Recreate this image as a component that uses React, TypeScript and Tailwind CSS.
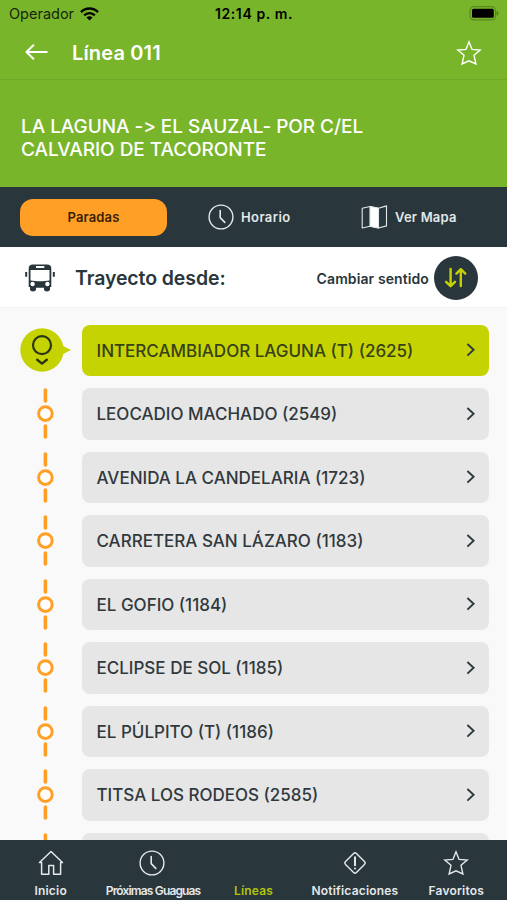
import type { ReactNode } from 'react'

const stops = [
  'INTERCAMBIADOR LAGUNA (T) (2625)',
  'LEOCADIO MACHADO (2549)',
  'AVENIDA LA CANDELARIA (1723)',
  'CARRETERA SAN LÁZARO (1183)',
  'EL GOFIO (1184)',
  'ECLIPSE DE SOL (1185)',
  'EL PÚLPITO (T) (1186)',
  'TITSA LOS RODEOS (2585)',
  '',
]

function ClockIcon() {
  return (
    <svg width="26" height="26" viewBox="0 0 26 26" fill="none" stroke="currentColor" strokeWidth="1.4" strokeLinecap="round">
      <circle cx="13" cy="13" r="11.9" />
      <path d="M12.2 6.5V13.6L16.8 18.4" strokeWidth="1.6" />
    </svg>
  )
}

function StarIcon() {
  return (
    <svg width="26" height="26" viewBox="0 0 26 26" fill="none" stroke="currentColor" strokeWidth="1.4" strokeLinejoin="miter">
      <path d="M13 1.8L16.1 9.4L24.2 10L18 15.3L19.9 24L13 20.8L6.1 24L8 15.3L1.8 10L9.9 9.4Z" />
    </svg>
  )
}

function WifiIcon() {
  return (
    <svg width="19" height="14" viewBox="0 0 19 14" fill="none" stroke="currentColor" strokeWidth="2.4">
      <path d="M1 5.1C5.8 .3 13.2 .3 18 5.1" />
      <path d="M4.2 8.4C7.2 5.3 11.8 5.3 14.8 8.4" />
      <path d="M9.5 13.6L6.5 10.5C8.1 8.9 10.9 8.9 12.5 10.5Z" fill="currentColor" stroke="none" />
    </svg>
  )
}

function MapIcon() {
  return (
    <svg width="27" height="24" viewBox="0 0 27 24" fill="none" stroke="currentColor" strokeWidth="1.1" strokeLinejoin="round">
      <path d="M1.2 3.2L9 1.5L17.5 3.3L25.5 .9V20.9L17.5 23L9 21.2L1.2 23Z" />
      <path d="M9 1.5L17.5 3.3V23L9 21.2Z" fill="#fff" />
    </svg>
  )
}

function BusIcon() {
  return (
    <svg width="30" height="28" viewBox="0 0 30 28">
      <path
        fill="#28353a"
        fillRule="evenodd"
        d="M8 .5H22C24.8 .5 26.3 2 26.3 4.5V23H25V25.5C25 28 19 28 19 25.5V23.8H11V25.5C11 28 5 28 5 25.5V23H3.7V4.5C3.7 2 5.2 .5 8 .5ZM11 2V4H19.3V2ZM5.5 6V16.5C11 17.5 19 17.5 24.5 16.5V6Z"
      />
      <path d="M1.2 8V12.8M28.8 8V12.8" stroke="#28353a" strokeWidth="2" />
      <circle cx="7.6" cy="20" r="2.2" fill="#fff" />
      <circle cx="22.4" cy="20" r="2.2" fill="#fff" />
    </svg>
  )
}

function HomeIcon() {
  return (
    <svg width="26" height="26" viewBox="0 0 26 26" fill="none" stroke="currentColor" strokeWidth="1.5" strokeLinejoin="round" strokeLinecap="round">
      <path d="M1.5 12.5L13 1.5L24.5 12.5H22.6V24.2H15.6V15.5H10.8V24.2H3.6V12.5Z" />
    </svg>
  )
}

function AlertIcon() {
  return (
    <svg width="24" height="24" viewBox="0 0 24 24" fill="none" stroke="currentColor" strokeWidth="1.4" strokeLinecap="round">
      <rect x="4.3" y="4.3" width="15.4" height="15.4" rx="2" transform="rotate(45 12 12)" />
      <path d="M12 6.2V14.2M12 17.4V17.5" strokeWidth="2" />
    </svg>
  )
}

function CurrentStopMarker() {
  return (
    <svg width="52" height="44" viewBox="0 0 52 44" fill="none">
      <path d="M40 16.5L51 22L40 27.5Z" fill="#c6d303" />
      <circle cx="22" cy="22" r="21.7" fill="#c6d303" />
      <circle cx="22" cy="17.2" r="9" stroke="#2b350f" strokeWidth="2.2" />
      <path d="M17.2 31.8L22 35.6L26.8 31.8" stroke="#2b350f" strokeWidth="2.4" strokeLinecap="round" strokeLinejoin="round" />
    </svg>
  )
}

function StopMarker() {
  return (
    <svg width="18" height="51" viewBox="0 0 18 51" fill="none" stroke="#ff9f26">
      <path d="M9.4 2V13M9.4 38V49" strokeWidth="3.6" strokeLinecap="round" />
      <circle cx="9.4" cy="25.6" r="6.8" strokeWidth="3" fill="#fff" />
    </svg>
  )
}

function StopRow({ name, active }: { name: string; active: boolean }) {
  return (
    <li className="flex h-[51.5px] shrink-0">
      <div className={`flex w-[62px] items-center ${active ? '' : 'pl-4'}`}>{active ? <CurrentStopMarker /> : <StopMarker />}</div>
      <div className={`flex w-[407px] items-center justify-between rounded-lg pr-[13px] pl-[14.5px] ${active ? 'bg-[#c6d303]' : 'bg-[#e6e6e6]'}`}>
        <span className={`pt-0.5 text-[17px] font-medium whitespace-nowrap ${active ? 'text-[#36411a]' : 'text-[#30393d]'}`}>{name}</span>
        <svg width="10" height="16" viewBox="0 0 10 16" fill="none" stroke="#30393d" strokeWidth="1.9">
          <path d="M1.4 2L7.6 7.8L1.4 13.6" />
        </svg>
      </div>
    </li>
  )
}

function NavItem({ icon, label, className = 'tracking-[0.2px]' }: { icon?: ReactNode; label: string; className?: string }) {
  return (
    <div className="flex flex-1 flex-col items-center">
      <div className="flex h-[46px] items-center">{icon}</div>
      <span className={`text-[12px] leading-[10px] font-semibold whitespace-nowrap ${className}`}>{label}</span>
    </div>
  )
}

export default function App() {
  return (
    <div className="flex h-[900px] w-[507px] flex-col overflow-hidden bg-[#f9f9f9] font-['Inter',sans-serif]">
      <header className="flex h-[187px] shrink-0 flex-col bg-[#79b52b] text-white">
        <div className="grid h-[27px] grid-cols-3 items-center pr-2 pl-[9px] text-black">
          <div className="flex items-center gap-1.5">
            <span className="text-[14.5px] text-[#16260a]">Operador</span>
            <WifiIcon />
          </div>
          <span className="text-center text-[14px] font-semibold tracking-[0.62px] whitespace-nowrap">12:14 p. m.</span>
          <svg className="justify-self-end" width="31" height="15" viewBox="0 0 31 15">
            <rect x="2" y=".7" width="25.6" height="13.2" rx="4" fill="none" stroke="#5a8a20" strokeWidth="1.2" />
            <rect x="4" y="2.8" width="21.8" height="9" rx="1.5" fill="#000" />
            <path d="M28.7 5C31 6 31 8.6 28.7 9.6Z" fill="#4e7a1b" />
          </svg>
        </div>
        <div className="flex h-[53px] items-center border-b border-[#70a928] px-[25px] pb-px">
          <svg className="-mt-0.5" width="23" height="16" viewBox="0 0 23 16" fill="none" stroke="currentColor" strokeWidth="2" strokeLinecap="round" strokeLinejoin="round">
            <path d="M21.8 8H1.5M8.3 1.2L1.5 8L8.3 14.8" />
          </svg>
          <h1 className="ml-6 flex-1 text-[20px] font-semibold tracking-[0.15px]">Línea 011</h1>
          <StarIcon />
        </div>
        <p className="pt-[35px] pl-[21px] text-[19px] leading-[23px] font-medium tracking-[-0.05px] [font-feature-settings:'calt'_0]">
          LA LAGUNA -&gt; EL SAUZAL- POR C/EL
          <br />
          CALVARIO DE TACORONTE
        </p>
      </header>

      <div className="flex h-[60px] shrink-0 items-center bg-[#29363c] pl-5 text-[13px] font-semibold text-[#e3e8ea]">
        <div className="flex h-[37px] w-[147px] items-center justify-center rounded-[13px] bg-[#ff9f26] pt-px tracking-[0.15px] text-[#3a1f05]">Paradas</div>
        <div className="ml-[41px] flex w-[153px] items-center gap-[7px] tracking-[0.4px]">
          <ClockIcon />
          <span className="pt-0.5">Horario</span>
        </div>
        <div className="flex items-center gap-[7px] tracking-[0.2px]">
          <MapIcon />
          <span className="pt-0.5">Ver Mapa</span>
        </div>
      </div>

      <div className="flex h-[61px] shrink-0 items-center border-b border-[#f4f4f4] bg-white pt-0.5 pr-[29px] pl-[25px] text-[#29363c]">
        <BusIcon />
        <h2 className="ml-5 flex-1 pt-0.5 text-[19.5px] font-semibold tracking-[-0.1px] whitespace-nowrap">Trayecto desde:</h2>
        <span className="text-[14px] font-semibold tracking-[0.1px] whitespace-nowrap">Cambiar sentido</span>
        <div className="ml-[5px] flex size-11 items-center justify-center rounded-full bg-[#29363c]">
          <svg width="24" height="22" viewBox="0 0 24 22" fill="none" stroke="#c6d303" strokeWidth="2.4" strokeLinecap="round" strokeLinejoin="round">
            <path d="M6.6 2V18.8M2.1 14.8L6.6 19.2L11 14.8M16.8 19V2.2M12.4 6.6L16.8 2.2L21.3 6.6" />
          </svg>
        </div>
      </div>

      <ul className="flex min-h-0 flex-1 flex-col gap-3 overflow-hidden pt-[16.5px] pl-5">
        {stops.map((name, i) => (
          <StopRow key={i} name={name} active={i === 0} />
        ))}
      </ul>

      <nav className="flex h-[60px] shrink-0 bg-[#29363c] text-[#e3e8ea]">
        <NavItem icon={<HomeIcon />} label="Inicio" />
        <NavItem icon={<ClockIcon />} label="Próximas Guaguas" className="pl-0.5 tracking-[-0.85px]" />
        <NavItem label="Líneas" className="tracking-[0.2px] text-[#b3c40a]" />
        <NavItem icon={<AlertIcon />} label="Notificaciones" />
        <NavItem icon={<StarIcon />} label="Favoritos" />
      </nav>
    </div>
  )
}
